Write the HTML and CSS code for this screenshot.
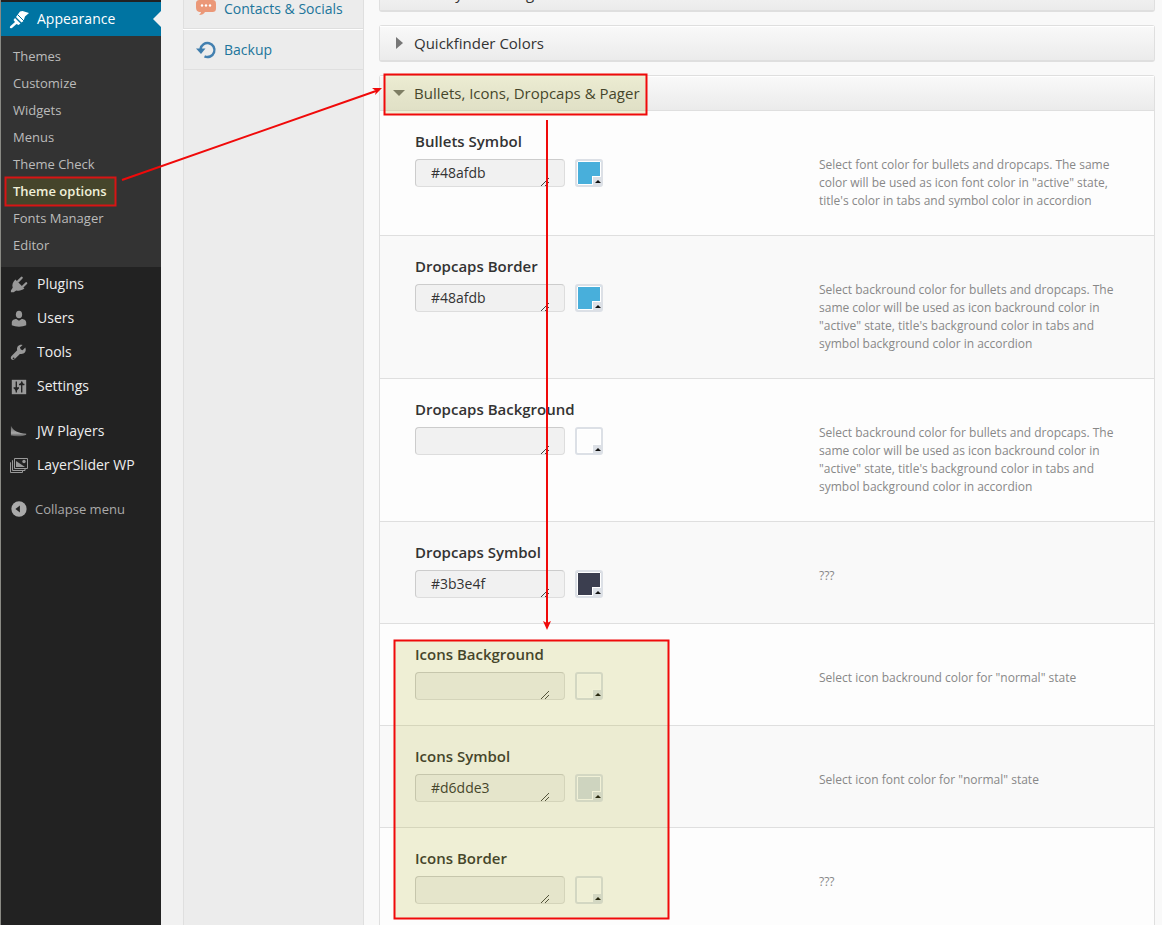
FILE: index.html
```html
<!DOCTYPE html>
<html lang="en">
<head>
<meta charset="utf-8">
<title>Theme options</title>
<link rel="stylesheet" href="styles.css">
</head>
<body>
<div class="app">
  <nav class="admin" aria-label="Admin menu">
    <a class="current" href="#"><svg class="icon" viewBox="0 0 18 18"><path fill="#fff" d="M10 1.500 12.500 1 19 3 15 6.500 13.500 11 11.500 12.500 6 7zM5 8l5.500 5.500-2 1.500-2-1-4.500 4c-2 .8-2.800-.5-1.500-2L5 12 3.500 10z"/><path d="m7.500 4.500 7 7" stroke="#0074a2"/></svg>Appearance</a>
    <ul class="submenu">
      <li><a href="#">Themes</a></li>
      <li><a href="#">Customize</a></li>
      <li><a href="#">Widgets</a></li>
      <li><a href="#">Menus</a></li>
      <li><a href="#">Theme Check</a></li>
      <li><a class="selected" href="#" aria-current="page">Theme options</a></li>
      <li><a href="#">Fonts Manager</a></li>
      <li><a href="#">Editor</a></li>
    </ul>
    <ul class="menu">
      <li><a href="#"><svg class="icon" viewBox="0 0 20 20"><path fill="#999" d="m6 4 10 10c-3 2-6 3-9 2l-3 2H1v-2l2-3c-1-3 0-6 3-9z"/><path d="m9 6 4-4m1 10 4-4" stroke="#999" stroke-width="2.500" stroke-linecap="round"/></svg>Plugins</a></li>
      <li><a href="#"><svg class="icon" viewBox="0 0 20 20"><ellipse cx="10" cy="5" rx="3.500" ry="4.200" fill="#999"/><path fill="#999" d="M2 17v-3c0-3 3-4 5-4l3 2 3-2c2 0 5 1 5 4v3c-4 2-12 2-16 0z"/></svg>Users</a></li>
      <li><a href="#"><svg class="icon" viewBox="0 0 20 20"><path fill="#999" fill-rule="evenodd" d="m17 4-3 3-2-1-1-2 3-3c-4-1-7 2-6 6l-6 6c-3 3 1 6 3 4l6-6c4 1 8-2 6-7zM4 15a1 1 0 1 1 0 2 1 1 0 0 1 0-2z"/></svg>Tools</a></li>
      <li><a href="#"><svg class="icon" viewBox="0 0 20 20"><path fill="#999" d="M2 2h16v16H2z"/><path d="M7 4v12M4 11h6M13 4v12M10 7h6" stroke="#222" stroke-width="1.500"/><path fill="#222" d="m4 11 3 4 3-4zm6-3 3-4 3 4z"/></svg>Settings</a></li>
    </ul>
    <ul class="menu">
      <li><a href="#"><svg class="icon" viewBox="0 0 20 20"><defs><linearGradient id="jw" x2="0" y2="1"><stop stop-color="#555"/><stop offset=".7" stop-color="#aaa"/><stop offset="1" stop-color="#555"/></linearGradient></defs><path fill="url(#jw)" d="M1 3c3 6 8 8 17 9v1c-4 2-12 2-17 1z"/></svg>JW Players</a></li>
      <li><a href="#"><svg class="icon" viewBox="0 0 18 18"><path d="M4.500 1.500h13v10h-13zM3 3.500h-.5v10H15v-1.500M1 5.500H.5v10h12V14" fill="none" stroke="#999"/><path fill="#999" d="m6 4 9 6H6z"/><circle cx="14" cy="4.500" r="1.700" fill="#999"/></svg>LayerSlider WP</a></li>
    </ul>
    <button class="collapse" type="button"><svg class="icon" viewBox="0 0 20 20"><circle cx="10" cy="10" r="8.500" fill="#aaa"/><path fill="#222" d="m6 10 5-4v8z"/></svg>Collapse menu</button>
  </nav>
  <nav class="tabs" aria-label="Option sections">
    <a class="tab tab-first" href="#"><svg class="icon" viewBox="0 0 20 20"><path fill="#eb9878" d="M4 1h12c3 0 4 1 4 4v4c0 3-1 4-4 4H9c-1 2-3 3-6 3 1-1 2-2 2-3-4 0-5-2-5-5V5c0-3 1-4 4-4z"/><circle cx="6" cy="6.500" r="1.200" fill="#fff"/><circle cx="10" cy="6.500" r="1.200" fill="#fff"/><circle cx="14" cy="6.500" r="1.200" fill="#fff"/></svg>Contacts &amp; Socials</a>
    <a class="tab" href="#"><svg class="icon" viewBox="0 0 20 20"><path d="M4.500 9a7 7 0 1 1 4 7.400" fill="none" stroke="#4380b0" stroke-width="2.500"/><path fill="#3f7dac" d="M0 8.500h9.500l-4.500 5.500z"/></svg>Backup</a>
  </nav>
  <main class="content">
    <section class="panel"><h2 class="heading"><span class="arrow"></span>Gallery &amp; Catalog</h2></section>
    <section class="panel"><h2 class="heading"><span class="arrow"></span>Quickfinder Colors</h2></section>
    <section class="panel open">
      <h2 class="heading"><span class="arrow down"></span>Bullets, Icons, Dropcaps &amp; Pager</h2>
      <div class="row"><div class="field"><label for="f1">Bullets Symbol</label><div class="line"><textarea id="f1" rows="1">#48afdb</textarea><button class="swatch blue" type="button" aria-label="Pick color"></button></div></div><p class="help">Select font color for bullets and dropcaps. The same color will be used as icon font color in "active" state, title's color in tabs and symbol color in accordion</p></div>
      <div class="row"><div class="field"><label for="f2">Dropcaps Border</label><div class="line"><textarea id="f2" rows="1">#48afdb</textarea><button class="swatch blue" type="button" aria-label="Pick color"></button></div></div><p class="help">Select backround color for bullets and dropcaps. The same color will be used as icon backround color in "active" state, title's background color in tabs and symbol background color in accordion</p></div>
      <div class="row"><div class="field"><label for="f3">Dropcaps Background</label><div class="line"><textarea id="f3" rows="1"></textarea><button class="swatch" type="button" aria-label="Pick color"></button></div></div><p class="help">Select backround color for bullets and dropcaps. The same color will be used as icon backround color in "active" state, title's background color in tabs and symbol background color in accordion</p></div>
      <div class="row"><div class="field"><label for="f4">Dropcaps Symbol</label><div class="line"><textarea id="f4" rows="1">#3b3e4f</textarea><button class="swatch dark" type="button" aria-label="Pick color"></button></div></div><p class="help">???</p></div>
      <div class="row"><div class="field"><label for="f5">Icons Background</label><div class="line"><textarea id="f5" rows="1"></textarea><button class="swatch" type="button" aria-label="Pick color"></button></div></div><p class="help">Select icon backround color for "normal" state</p></div>
      <div class="row"><div class="field"><label for="f6">Icons Symbol</label><div class="line"><textarea id="f6" rows="1">#d6dde3</textarea><button class="swatch gray" type="button" aria-label="Pick color"></button></div></div><p class="help">Select icon font color for "normal" state</p></div>
      <div class="row"><div class="field"><label for="f7">Icons Border</label><div class="line"><textarea id="f7" rows="1"></textarea><button class="swatch" type="button" aria-label="Pick color"></button></div></div><p class="help">???</p></div>
    </section>
  </main>
  <svg class="notes" width="700" height="925" viewBox="0 0 700 925" aria-hidden="true">
    <g fill="#a5a509" fill-opacity=".16" stroke="#f00a0a" stroke-width="2">
      <rect x="5.500" y="177.500" width="110" height="28" stroke="#d81414"/>
      <rect x="384.500" y="74.500" width="262" height="40"/>
      <rect x="394.500" y="640.500" width="274" height="278"/>
    </g>
    <path d="M122 180 376 91M547 120v503" stroke="#f00a0a" stroke-width="2"/>
    <path fill="#f00a0a" d="m382 88-7 7 1-4-4-3zM543 621l4 2 4-2-4 9z"/>
  </svg>
</div>
</body>
</html>
```
FILE: styles.css
```css
* { box-sizing: border-box; }
body { margin: 0; background: #f9f9f9; color: #333; font: 15px/20px "Open Sans", "Noto Sans", sans-serif; }
a { color: inherit; text-decoration: none; }
ul { margin: 0; padding: 0; list-style: none; }
.app { position: relative; display: flex; height: 100vh; overflow: hidden; }
.icon { flex: none; width: 18px; height: 18px; fill: none; overflow: visible; }

/* Admin menu */
.admin { flex: none; width: 161px; padding-top: 2px; background: #222; border-left: 1px solid #8a8a84; color: #eee; font-size: 14px; }
.current { position: relative; display: flex; align-items: center; gap: 9px; height: 34px; padding-left: 9px; background: #0074a2; color: #fff; }
.current::after { content: ""; position: absolute; right: 0; border: 8px solid transparent; border-right-color: #f1f1f1; }
.submenu { padding: 7px 0 8px; background: #333; color: #bbb; font-size: 13px; }
.submenu a { display: block; padding: 0 12px; line-height: 27px; }
.submenu .selected { color: #fff; font-weight: 600; }
.menu { margin-bottom: 11px; }
.menu a { display: flex; align-items: center; gap: 9px; height: 34px; padding-left: 9px; }
.menu .icon { margin-top: 2px; }
.collapse { display: flex; align-items: center; gap: 7px; height: 32px; padding: 0 9px; border: 0; background: none; color: #aaa; font: inherit; font-size: 13px; }

/* Section tabs */
.tabs { flex: none; width: 203px; padding-left: 22px; background: linear-gradient(to right, #f1f1f1 22px, #dfdfdf 22px, #dfdfdf 23px, #ececec 23px); border-right: 1px solid #dfdfdf; color: #21759b; font-size: 14px; }
.tab { display: flex; align-items: center; gap: 8px; height: 41px; padding-left: 13px; border-top: 1px solid #fff; border-bottom: 1px solid #dfdfdf; }
.tab .icon { width: 20px; height: 20px; }
.tab-first { margin-top: -12px; }

/* Panels */
.content { flex: 1; padding: 0 7px 0 15px; }
.panel { margin-bottom: 13px; border: 1px solid #dfdfdf; border-bottom-width: 2px; border-radius: 3px; }
.panel:first-child { margin-top: -25px; }
.heading { display: flex; align-items: center; height: 34px; margin: 0; padding: 0 13px 2px; border-top: 1px solid #fff; background: linear-gradient(#f9f9f9, #ebebeb); font-size: 15px; font-weight: 400; }
.arrow { width: 21px; }
.arrow::before { content: ""; display: block; width: 0; margin-left: 3px; border: 6px solid transparent; border-left: 7px solid #777; border-right: 0; }
.arrow.down::before { margin-left: 0; border: 6px solid transparent; border-top: 6px solid #777; border-bottom: 0; }
.open { background: #fdfdfd; }
.open .heading { height: 35px; border-bottom: 1px solid #dfdfdf; }
.row { display: flex; justify-content: space-between; padding: 20px 35px 25px; border-bottom: 1px solid #dfdfdf; }
.row:nth-child(odd) { background: #f9f9f9; }
.field label { display: block; margin-bottom: 8px; font-size: 15px; font-weight: 600; }
.help { width: 300px; margin: 25px 0 0; color: #888; font-size: 12px; line-height: 18px; }

/* Colour field */
.line { position: relative; display: flex; gap: 10px; }
.line::before { content: ""; position: absolute; left: 126px; top: 19px; width: 8px; height: 8px; background: linear-gradient(135deg, transparent 46%, #444 46% 54%, transparent 54% 72%, #444 72% 80%, transparent 80%); }
textarea { width: 150px; height: 28px; padding: 3px 15px; border: 1px solid #ccc; border-right-color: #ddd; border-bottom-color: #ddd; border-radius: 4px; background: #f1f1f1; color: #333; font: 14px/20px "Open Sans", sans-serif; resize: none; overflow: hidden; }
.swatch { position: relative; width: 28px; height: 28px; padding: 0; border: 2px solid #dce0e6; border-radius: 3px; background: #fdfdfd; box-shadow: inset 0 0 0 1px #fff; }
.swatch::before { content: ""; position: absolute; right: 0; bottom: 0; width: 8px; height: 8px; border: 1px solid #fff; border-width: 1px 0 0 1px; background: #dce0e6; }
.swatch::after { content: ""; position: absolute; right: 0; bottom: 2px; border: 3px solid transparent; border-top: 0; border-bottom-color: #111; }
.blue { background: #48afdb; }
.dark { background: #3b3e4f; }
.gray { background: #d6dde3; }
.notes { position: absolute; top: 0; left: 0; pointer-events: none; }
```
